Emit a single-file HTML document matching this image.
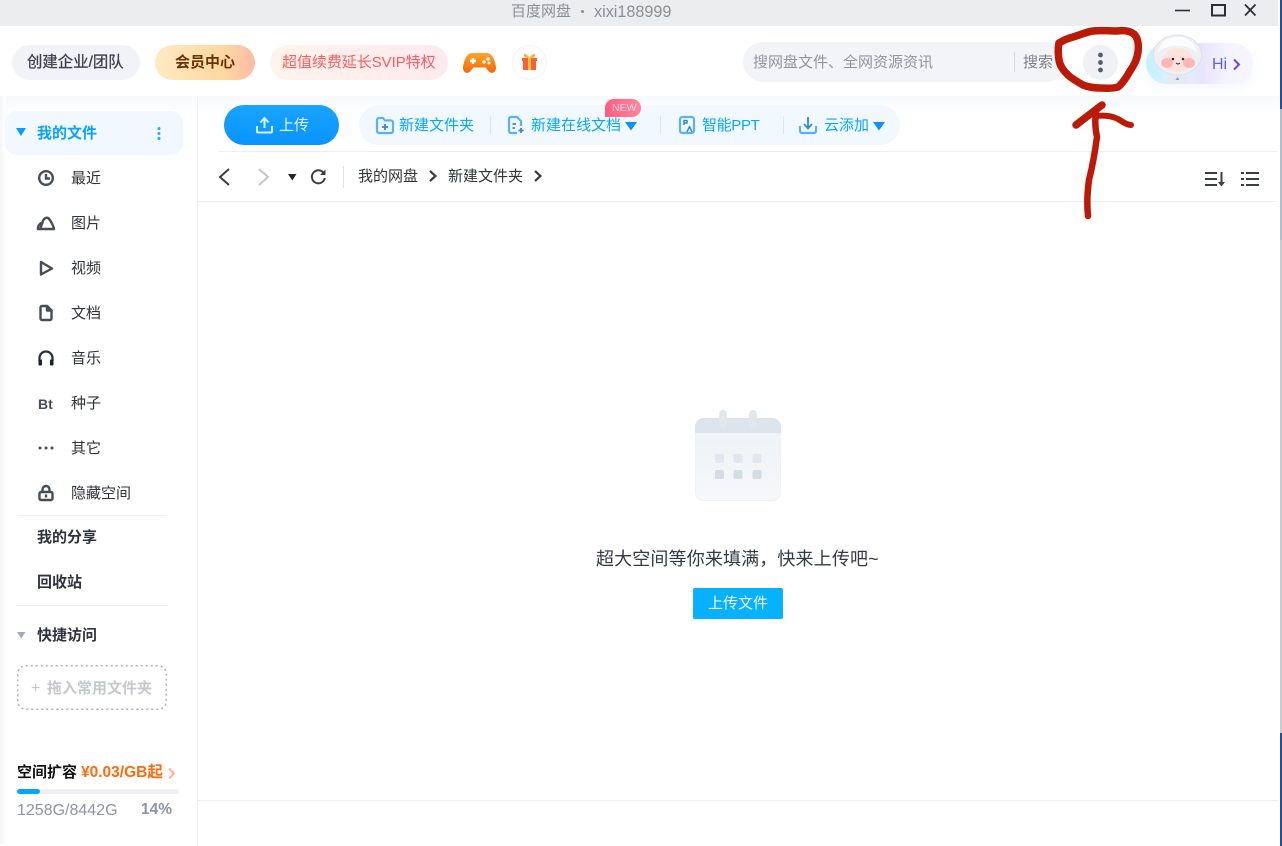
<!DOCTYPE html>
<html lang="zh"><head><meta charset="utf-8"><title>百度网盘</title>
<style>
html,body{margin:0;padding:0;width:1282px;height:846px;overflow:hidden;background:#fff}
body{position:relative;font-family:"Liberation Sans","Noto Sans CJK SC",sans-serif;font-size:15px;color:#2f333d}
div,span,svg{position:absolute}
.t{white-space:nowrap;line-height:20px;height:20px;transform:translateY(-9px)}
.b{font-weight:700}
.blue{color:#06a7ff}
.pill{border-radius:18px;height:35px;top:45px}
.dv{width:1px;height:18px;top:116px;background:#d6e8f7}
.hl{height:1px;background:#eceef1}
svg{overflow:visible}
</style></head><body>

<!-- title bar -->
<div style="left:0;top:0;width:1278px;height:26px;background:#ecedef"></div>
<div class="t" style="left:511px;top:11px;color:#8b8e95;font-size:15px">百度网盘</div>
<div style="left:581px;top:10px;width:3px;height:3px;border-radius:50%;background:#8b8e95"></div>
<div class="t" style="left:594px;top:11px;color:#8b8e95;font-size:16.200px">xixi188999</div>
<svg style="left:1170px;top:0" width="100" height="26" fill="none" stroke="#2c2f36">
<path d="M5 10.500H20" stroke-width="1.600"/><rect x="42" y="5" width="13" height="10.500" stroke-width="2"/><path d="M75 4.500L85.500 15.500M85.500 4.500L75 15.500" stroke-width="1.800"/></svg>
<!-- right edge -->
<div style="left:1280px;top:0;width:1.500px;height:109px;background:#1f4ea6"></div>
<div style="left:1280px;top:109px;width:1.500px;height:131px;background:#aebfd3"></div>
<div style="left:1280px;top:240px;width:1.500px;height:493px;background:#c9cbcf"></div>
<div style="left:1280px;top:733px;width:1.500px;height:113px;background:#1f4ea6"></div>

<!-- top pills -->
<div class="pill" style="left:12px;width:128px;background:#f2f3f8"></div>
<div class="t" style="left:27px;top:62px;color:#3f4350;-webkit-text-stroke:.3px #3f4350;font-size:15.400px">创建企业/团队</div>
<div class="pill" style="left:155px;width:100px;background:linear-gradient(90deg,#ffeac3,#ffd7a0 70%,#ffb9a8)"></div>
<div class="t b" style="left:175px;top:62px;font-size:15px;color:#6b3200">会员中心</div>
<div class="pill" style="left:270px;width:178px;background:linear-gradient(90deg,#fff4ec,#ffeaee)"></div>
<div class="t" style="left:282px;top:62px;color:#ff5a5f;white-space:nowrap;letter-spacing:-.05px">超值续费延长SVIP特权</div>
<svg style="left:463px;top:52px" width="33" height="22" viewBox="0 0 33 22"><defs><linearGradient id="g1" x1="0" y1="0" x2="0" y2="1"><stop offset="0" stop-color="#ffa52b"/><stop offset="1" stop-color="#f4660d"/></linearGradient></defs>
<path d="M9 1H24C29 1 32 8 33 15C33.500 21 28 22.500 25.500 19L22.500 15.500H10.500L7.500 19C5 22.500 -.5 21 0 15C1 8 4 1 9 1Z" fill="url(#g1)"/>
<path d="M7 9H13M10 6V12" stroke="#fff" stroke-width="2.400"/><circle cx="21" cy="10" r="1.700" fill="#fff"/><circle cx="25" cy="7" r="1.700" fill="#fff"/><circle cx="26" cy="11" r="1.500" fill="#fff"/></svg>
<div style="left:512px;top:45px;width:33px;height:33px;border:1px solid #f2f3f5;border-radius:50%;background:#fff"></div>
<svg style="left:520px;top:52px" width="19" height="20" viewBox="0 0 19 20"><path d="M2 6H17V9H16V18H3V9H2Z" fill="#fb5f36"/><path d="M8 6h3v12H8z" fill="#ffc53f"/><path d="M9.500 6C7 1 3 1 4 4 4.500 5.500 7 6 9.500 6 12 6 14.500 5.500 15 4 16 1 12 1 9.500 6Z" fill="#ffb02e"/></svg>

<!-- search -->
<div style="left:743px;top:42px;width:323px;height:40px;border-radius:20px;background:#f3f4f8"></div>
<div class="t" style="left:753px;top:62px;color:#92959e;font-size:15px">搜网盘文件、全网资源资讯</div>
<div style="left:1014px;top:52px;width:1px;height:20px;background:#d6d8de"></div>
<div class="t" style="left:1023px;top:62px;color:#7c808a;font-size:15px">搜索</div>
<div style="left:1083px;top:45px;width:35px;height:35px;border-radius:50%;background:#f0f1f6"></div>
<svg style="left:1083px;top:45px" width="35" height="35" fill="#555c6e"><circle cx="17.500" cy="10" r="2.400"/><circle cx="17.500" cy="17.500" r="2.400"/><circle cx="17.500" cy="25" r="2.400"/></svg>

<!-- avatar -->
<div style="left:1146px;top:43px;width:107px;height:41px;border-radius:21px;background:linear-gradient(90deg,#c4f1ff 0%,#dcf4ff 30%,#e8e4ff 52%,#f4f3ff 75%,#f6f5ff 100%);box-shadow:0 4px 12px rgba(190,205,255,.18)"></div>
<svg style="left:1150px;top:32px" width="56" height="56" viewBox="0 0 56 56">
<path d="M19 42H36L40 52H15Z" fill="#e6e9ee"/><path d="M27.500 45l2 3h-4z" fill="#7d9ae0"/>
<ellipse cx="27.500" cy="23" rx="24" ry="20" fill="#eef0f3" stroke="#dfe1e5" stroke-width="1"/>
<path d="M8 22C10 -1 45 -1 47 22C42 11 13 11 8 22Z" fill="#fbfcfe"/>
<ellipse cx="28" cy="28" rx="15" ry="12" fill="#fde3de"/>
<ellipse cx="17" cy="31" rx="6" ry="5" fill="#ffb5b5"/><ellipse cx="39" cy="31" rx="6" ry="5" fill="#ffb5b5"/>
<circle cx="23" cy="27" r="1.300" fill="#3b2a2a"/><circle cx="33" cy="27" r="1.300" fill="#3b2a2a"/>
<path d="M26 31q2 2 4 0" stroke="#3b2a2a" stroke-width="1" fill="none"/></svg>
<div class="t" style="left:1212px;top:64px;color:#5a63e0;font-size:16px">Hi</div>
<svg style="left:1232px;top:58px" width="10" height="13" fill="none" stroke="#7040e8" stroke-width="2"><path d="M2 1.500L7 6.500L2 11.500"/></svg>

<!-- soft band -->
<div style="left:0;top:96px;width:1278px;height:18px;background:linear-gradient(#f8f9fc,#fff)"></div>
<div style="left:0;top:96px;width:6px;height:748px;background:linear-gradient(90deg,#f4f5f7,#fff)"></div>
<div style="left:197px;top:96px;width:1px;height:750px;background:#eef0f2"></div>

<!-- sidebar -->
<div style="left:5px;top:111px;width:178px;height:44px;border-radius:12px;background:#f1f8ff"></div>
<svg style="left:16px;top:128px" width="11" height="9"><path d="M0 0H10L5 8Z" fill="#06a0ff"/></svg>
<div class="t b blue" style="left:37px;top:133px;font-size:15px;color:#0aa0ff">我的文件</div>
<svg style="left:155px;top:126px" width="8" height="15" fill="#2ea6f5"><circle cx="4" cy="2.500" r="1.500"/><circle cx="4" cy="7.500" r="1.500"/><circle cx="4" cy="12.500" r="1.500"/></svg>

<svg style="left:37px;top:169px" width="18" height="18" fill="none" stroke="#474c59" stroke-width="2.400"><circle cx="9" cy="9" r="6.800"/><path d="M9 5V9.500H13"/></svg>
<svg style="left:37px;top:214px" width="18" height="18" fill="none" stroke="#474c59" stroke-width="2.400" stroke-linejoin="round"><path d="M1 15C.5 12 3 9 5.500 8.500C6 5 9 3 11 4C13 5 16.500 12 17 15Z"/><path d="M5.500 8.500L3.500 14"/></svg>
<svg style="left:37px;top:259px" width="18" height="18" fill="none" stroke="#474c59" stroke-width="2.400" stroke-linejoin="round"><path d="M4 3L15 9.500L4 15.500Z"/></svg>
<svg style="left:37px;top:304px" width="18" height="18" fill="none" stroke="#474c59" stroke-width="2.400" stroke-linejoin="round"><path d="M5 2H10L14.500 6.500V14.500A1.500 1.500 0 0 1 13 16H5A1.500 1.500 0 0 1 3.500 14.500V3.500A1.500 1.500 0 0 1 5 2Z"/><path d="M10 2L14.500 6.500H10Z" fill="#474c59"/></svg>
<svg style="left:37px;top:349px" width="18" height="18" fill="none" stroke="#2c303b" stroke-width="2.300"><path d="M2.500 12V9A6.500 6.500 0 0 1 15.500 9V12"/><rect x="1.500" y="10.500" width="3.500" height="6" rx="1" fill="#1e222c" stroke="none"/><rect x="13" y="10.500" width="3.500" height="6" rx="1" fill="#1e222c" stroke="none"/></svg>
<div class="t b" style="left:38px;top:403px;font-size:14px;color:#474c59">Bt</div>
<svg style="left:37px;top:444px" width="18" height="8" fill="#474c59"><circle cx="3" cy="4" r="1.500"/><circle cx="9" cy="4" r="1.500"/><circle cx="15" cy="4" r="1.500"/></svg>
<svg style="left:37px;top:484px" width="18" height="18" fill="none" stroke="#474c59" stroke-width="2.400"><path d="M5.500 8V5.500A3.500 3.500 0 0 1 12.500 5.500V8"/><rect x="2.500" y="8" width="13" height="8" rx="1.500"/><path d="M9 10.500v3"/></svg>

<div class="t" style="left:71px;top:178px">最近</div>
<div class="t" style="left:71px;top:223px">图片</div>
<div class="t" style="left:71px;top:268px">视频</div>
<div class="t" style="left:71px;top:313px">文档</div>
<div class="t" style="left:71px;top:358px">音乐</div>
<div class="t" style="left:71px;top:403px">种子</div>
<div class="t" style="left:71px;top:448px">其它</div>
<div class="t" style="left:71px;top:493px">隐藏空间</div>
<div class="hl" style="left:17px;top:515px;width:150px"></div>
<div class="t b" style="left:37px;top:537px;font-size:15px">我的分享</div>
<div class="t b" style="left:37px;top:582px;font-size:15px">回收站</div>
<div class="hl" style="left:17px;top:605px;width:150px"></div>
<svg style="left:17px;top:632px" width="9" height="7"><path d="M0 0H8.500L4.250 6.500Z" fill="#a4a9b6"/></svg>
<div class="t b" style="left:37px;top:635px;font-size:15px">快捷访问</div>
<svg style="left:17px;top:665px" width="150" height="45" fill="none"><rect x=".75" y=".75" width="148.500" height="43.500" rx="8" stroke="#aeb2bf" stroke-width="1.500" stroke-dasharray="2 3"/></svg>
<div class="t" style="left:31px;top:688px;color:#c5c8d1;font-size:16px">+</div>
<div class="t b" style="left:47px;top:688px;color:#c5c8d1;font-size:15px">拖入常用文件夹</div>

<div class="t b" style="left:17px;top:772px;color:#111;font-size:15px">空间扩容</div>
<div class="t b" style="left:81px;top:772px;color:#ff6a0a;font-size:15.500px">¥0.03/GB起</div>
<svg style="left:167px;top:767px" width="9" height="13" fill="none" stroke="#ffb48a" stroke-width="2"><path d="M2 1.500L7 6.500L2 11.500"/></svg>
<div style="left:17px;top:789px;width:162px;height:5px;border-radius:3px;background:#eef0f6"></div>
<div style="left:17px;top:789px;width:23px;height:5px;border-radius:3px;background:#06a7ff"></div>
<div class="t" style="left:17px;top:810px;color:#8d94a4;font-size:16px">1258G/8442G</div>
<div class="t b" style="left:141px;top:809px;color:#8d94a4;font-size:15.500px">14%</div>

<!-- toolbar -->
<div style="left:224px;top:105px;width:115px;height:40px;border-radius:20px;background:linear-gradient(#1aa3ff,#0794ff)"></div>
<svg style="left:256px;top:116px" width="17" height="18" fill="none" stroke="#d9f0ff" stroke-width="2"><path d="M4.500 6.500L8.500 2L12.500 6.500M8.500 2.500V12M1 10V15.500A1 1 0 0 0 2 16.500H15A1 1 0 0 0 16 15.500V10"/></svg>
<div class="t" style="left:279px;top:125px;color:#eaf6ff;font-size:15px">上传</div>
<div style="left:359px;top:105px;width:541px;height:40px;border-radius:20px;background:#f1f8ff"></div>

<svg style="left:376px;top:117px" width="18" height="17" fill="none" stroke="#58b2f8" stroke-width="2.200" stroke-linejoin="round"><path d="M1 3A2 2 0 0 1 3 1H7L9 3.500H15A2 2 0 0 1 17 5.500V14A2 2 0 0 1 15 16H3A2 2 0 0 1 1 14Z"/><path d="M9 7V13M6 10H12" stroke="#3189d8" stroke-width="1.800"/></svg>
<div class="t blue" style="left:399px;top:125px">新建文件夹</div>
<div class="dv" style="left:490px"></div>
<svg style="left:508px;top:116px" width="17" height="19" fill="none" stroke="#58b2f8" stroke-width="2.200" stroke-linejoin="round"><path d="M9 17H3A2 2 0 0 1 1 15V3A2 2 0 0 1 3 1H9L13 5V10"/><path d="M4.500 8H8M4.500 12H7" stroke="#3189d8" stroke-width="1.800"/><path d="M13 12V17M10.500 14.500H15.500" stroke="#3189d8" stroke-width="1.800"/></svg>
<div class="t blue" style="left:531px;top:125px">新建在线文档</div>
<svg style="left:625px;top:122px" width="12" height="9"><path d="M0 0H12L6 8.500Z" fill="#0a94f5"/></svg>
<div style="left:605px;top:99px;width:36px;height:18px;border-radius:9px 9px 9px 0;background:linear-gradient(90deg,#ff5c80,#ff85a0)"></div>
<div class="t" style="left:612px;top:107px;color:#ffd9e2;font-size:10.500px">NEW</div>
<div class="dv" style="left:660px"></div>
<svg style="left:679px;top:116px" width="17" height="19" fill="none" stroke="#58b2f8" stroke-width="2.200" stroke-linejoin="round"><rect x="1" y="1" width="14" height="16" rx="2.500"/><path d="M5 9V4.500H8V7H5" stroke="#3189d8" stroke-width="1.500"/><path d="M8 16L10.500 10.500L13 16" stroke="#3189d8" stroke-width="1.500"/></svg>
<div class="t blue" style="left:702px;top:125px;letter-spacing:-.35px">智能PPT</div>
<div class="dv" style="left:783px"></div>
<svg style="left:799px;top:116px" width="18" height="18" fill="none" stroke="#58b2f8" stroke-width="2.200"><path d="M1 10V15A2 2 0 0 0 3 17H15A2 2 0 0 0 17 15V10"/><path d="M9 1V12M5 8L9 12.500L13 8" stroke="#3189d8" stroke-width="1.800"/></svg>
<div class="t blue" style="left:824px;top:125px">云添加</div>
<svg style="left:873px;top:122px" width="12" height="9"><path d="M0 0H12L6 8.500Z" fill="#0a94f5"/></svg>

<div class="hl" style="left:218px;top:151px;width:1060px"></div>

<!-- breadcrumb -->
<svg style="left:216px;top:167px" width="16" height="20" fill="none" stroke="#3a3e48" stroke-width="2"><path d="M13 2L4 10L13 18"/></svg>
<svg style="left:256px;top:167px" width="16" height="20" fill="none" stroke="#c4c6cb" stroke-width="2"><path d="M3 2L12 10L3 18"/></svg>
<svg style="left:288px;top:174px" width="9" height="7"><path d="M0 0H8.500L4.250 6.500Z" fill="#22252c"/></svg>
<svg style="left:310px;top:169px" width="17" height="16" fill="none" stroke="#3a3e48" stroke-width="2"><path d="M14 4.500A6.500 6.500 0 1 0 14.800 9"/><path d="M15.500 0.500V6H10" fill="#3a3e48" stroke="none"/></svg>
<div style="left:343px;top:166px;width:1px;height:22px;background:#dfe1e5"></div>
<div class="t" style="left:358px;top:176px">我的网盘</div>
<svg style="left:428px;top:170px" width="10" height="12" fill="none" stroke="#3a3e48" stroke-width="2.200"><path d="M2 1L7.500 6L2 11"/></svg>
<div class="t" style="left:448px;top:176px">新建文件夹</div>
<svg style="left:533px;top:170px" width="10" height="12" fill="none" stroke="#3a3e48" stroke-width="2.200"><path d="M2 1L7.500 6L2 11"/></svg>

<svg style="left:1205px;top:171px" width="21" height="16" fill="none" stroke="#3a3e48" stroke-width="2"><path d="M0 2H12M0 8H12M0 14H12M16.500 1V13"/><path d="M13 11H20L16.500 15.500Z" fill="#3a3e48" stroke="none"/></svg>
<svg style="left:1241px;top:171px" width="18" height="16" fill="none" stroke="#3a3e48" stroke-width="2"><path d="M5 2H18M5 8H18M5 14H18M0 2H3M0 8H3M0 14H3"/></svg>
<div class="hl" style="left:198px;top:201px;width:1080px"></div>

<!-- empty state -->
<div style="left:695px;top:418px;width:86px;height:83px;border-radius:9px;background:linear-gradient(#edf1f5,#f6f8fa);overflow:hidden;box-shadow:inset 0 0 0 1px #eef1f5">
<div style="left:0;top:0;width:86px;height:15px;background:#dce5ec"></div></div>
<div style="left:719px;top:410px;width:8px;height:18px;border-radius:4px;background:#e0e7ee"></div>
<div style="left:749px;top:410px;width:8px;height:18px;border-radius:4px;background:#e0e7ee"></div>
<svg style="left:715px;top:454px" width="47" height="26"><g fill="#e3e6f0"><rect width="9" height="9" rx="2"/><rect x="18.500" width="9" height="9" rx="2"/><rect x="37.500" width="9" height="9" rx="2"/></g><g fill="#d3dde6"><rect y="16" width="9" height="9" rx="2"/><rect x="18.500" y="16" width="9" height="9" rx="2"/><rect x="37.500" y="16" width="9" height="9" rx="2"/></g></svg>
<div class="t" style="left:596px;top:558px;font-size:18px;color:#333a45;letter-spacing:.14px">超大空间等你来填满，快来上传吧~</div>
<div style="left:693px;top:588px;width:90px;height:31px;border-radius:2px;background:#06b1ff"></div>
<div class="t" style="left:708px;top:603px;color:#f3fbff;font-size:15px">上传文件</div>
<div class="hl" style="left:198px;top:800px;width:1080px"></div>

<!-- red annotation -->
<svg style="left:0;top:0" width="1282" height="846" fill="none" stroke="#bb1a08" stroke-width="7.500" stroke-linecap="round" stroke-linejoin="round">
<path d="M1117 31C1125 30 1130 31 1134 34C1138 38 1139 44 1138 52C1137 60 1134 65 1130 71C1126 78 1122 84 1118 87C1112 89 1106 88 1100 88C1094 88 1088 87 1083 85C1076 81 1071 78 1068 75C1063 70 1060 66 1059 60C1058 54 1058 48 1059 43C1064 40 1069 38 1073 37C1080 35 1086 32 1093 31C1101 30 1109 31 1117 31Z"/>
<path d="M1088 216C1087 206 1087 194 1089 180C1092 168 1095 152 1097 137C1095 128 1095 118 1096 110" stroke-width="6.500"/>
<path d="M1076 125L1085 118L1102 105"/>
<path d="M1096 116C1105 115 1112 116 1118 119C1123 122 1127 125 1131 125" stroke-width="6"/>
</svg>
</body></html>
